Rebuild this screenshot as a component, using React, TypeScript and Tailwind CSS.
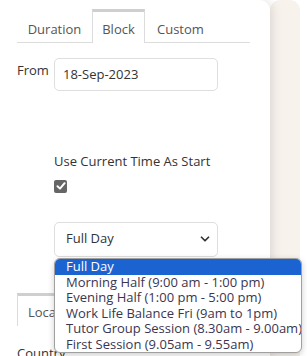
import { ChevronDown } from 'lucide-react'

const options = [
    'Full Day',
    'Morning Half (9:00 am - 1:00 pm)',
    'Evening Half (1:00 pm - 5:00 pm)',
    'Work Life Balance Fri (9am to 1pm)',
    'Tutor Group Session (8.30am - 9.00am)',
    'First Session (9.05am - 9.55am)',
]

export default function App() {
    return (
        <div className="relative flex w-[307px] h-[356px] overflow-hidden bg-white text-[13px] text-[#333] font-['Open_Sans',sans-serif]">
            {/* Main card */}
            <div className="relative z-10 w-[270px] shrink-0 h-full bg-white rounded-tr-[10px] shadow-[3px_0_10px_rgba(0,0,0,0.10)] pl-[17px] pt-[9px]">
                {/* Tabs */}
                <div className="flex w-[233px] h-[34px] border-b border-[#dcdcdc]">
                    <div className="w-[75px] pt-[11px] text-center text-[#555]">Duration</div>
                    <div className="w-[53px] h-[34px] -mb-px bg-white border-t-[3px] border-x border-[#cfcfcf] border-x-[#dcdcdc] pt-[8px] text-center text-[#555]">Block</div>
                    <div className="pl-[12px] pt-[11px] text-[#555]">Custom</div>
                </div>

                {/* From */}
                <div className="flex mt-[15px]">
                    <div className="w-[37px] pt-[3px]">From</div>
                    <div className="w-[164px] h-[33px] border border-[#dedede] rounded-[5px] pl-[8px] flex items-center">18-Sep-2023</div>
                </div>

                {/* Use current time */}
                <div className="pl-[37px] mt-[61px]">Use Current Time As Start</div>
                <div className="pl-[37px] mt-[8px]">
                    <div className="w-[13px] h-[13px] rounded-[2px] bg-[#666] flex items-center justify-center">
                        <svg width="10" height="10" viewBox="0 0 10 10">
                            <path d="M1.5 5.2 L4 7.6 L8.6 2.2" fill="none" stroke="white" strokeWidth="2" strokeLinecap="round" strokeLinejoin="round" />
                        </svg>
                    </div>
                </div>

                {/* Select */}
                <div className="ml-[37px] mt-[29px] w-[164px] h-[35px] border border-[#dedede] rounded-[5px] pl-[11px] pr-[5px] flex items-center justify-between">
                    <span>Full Day</span>
                    <ChevronDown size={14} strokeWidth={3} className="text-[#333]" />
                </div>

                {/* Second panel, mostly hidden by the open list */}
                <div className="mt-[36px] flex">
                    <div className="w-[37px] h-[33px] overflow-hidden border-t-[3px] border-l border-[#cfcfcf] border-l-[#dcdcdc] pl-[10px] pt-[7px] text-[#555] whitespace-nowrap">Location</div>
                </div>
                <div className="mt-[18px]">Country</div>
            </div>

            <div className="w-[30px] shrink-0 h-full bg-[#f7f2ec] rounded-t-[10px]"></div>

            {/* Open dropdown list */}
            <div className="absolute z-20 left-[54px] top-[258px] w-[248px] h-[95px] bg-white border border-[#a0a0a0] rounded-[6px] overflow-hidden shadow-[0_2px_6px_rgba(0,0,0,0.2)]">
                {options.map((o, i) => (
                    <div
                        key={o}
                        className={
                            i === 0
                                ? 'h-[15.5px] leading-[15.5px] pl-[11px] bg-[#1c63d2] text-white whitespace-nowrap'
                                : 'h-[15.5px] leading-[15.5px] pl-[11px] text-[#3b3550] whitespace-nowrap'
                        }
                    >
                        {o}
                    </div>
                ))}
            </div>
        </div>
    )
}
